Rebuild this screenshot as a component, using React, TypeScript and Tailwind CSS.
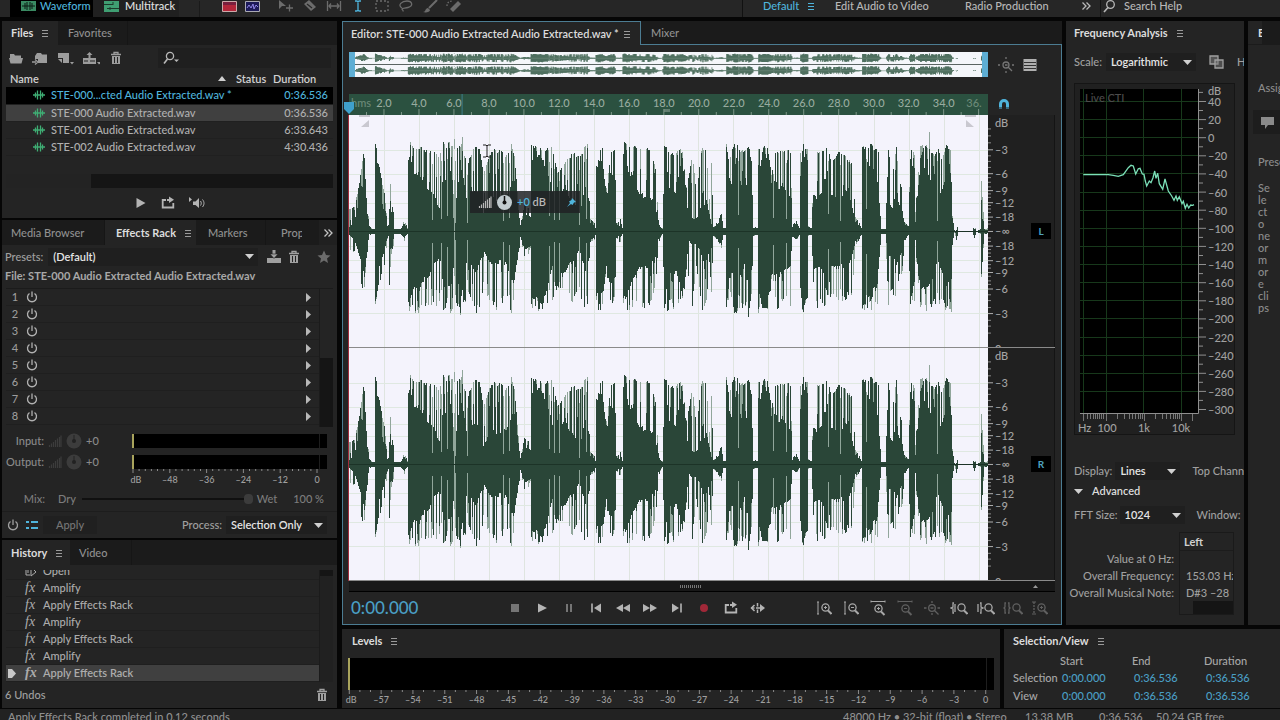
import { useState } from 'react';
import type { ReactNode } from 'react';

const files = [
  { name: 'STE-000...cted Audio Extracted.wav *', duration: '0:36.536', row: 'bg-black text-[#4fb4dc]' },
  { name: 'STE-000 Audio Extracted.wav', duration: '0:36.536', row: 'bg-[#404040] text-[#b0b0b0]' },
  { name: 'STE-001 Audio Extracted.wav', duration: '6:33.643', row: 'text-[#b0b0b0]' },
  { name: 'STE-002 Audio Extracted.wav', duration: '4:30.436', row: 'text-[#b0b0b0]' },
];

const history = ['Amplify', 'Apply Effects Rack', 'Amplify', 'Apply Effects Rack', 'Amplify', 'Apply Effects Rack'];

// label, distance from the top of a channel in percent
const dbScale: [string, number][] = [
  ['dB', 3.5], ['–3', 15], ['–6', 25.3], ['–9', 32.6], ['–12', 37.8], ['–18', 44], ['–∞', 50.2],
  ['–18', 56.5], ['–12', 62.8], ['–9', 67.9], ['–6', 75], ['–3', 85.6], ['0', 101],
];
const dbMinor = [6, 9, 12, 17.6, 20, 22.6, 27, 29, 31, 34, 35.5, 39, 40.5, 42, 45.5, 47, 53, 54.5, 58, 59.5, 61, 64.5, 66, 69.5, 71.5, 73, 77.5, 80, 83, 88.5, 91, 94];

const DURATION = 36.536;

// x, loudest peak, solid body
const envelope: [number, number, number][] = [
  [0, 22, 4], [5, 25, 10], [10, 49, 33], [14, 79, 48], [15, 75, 50], [17, 35, 25], [20, 5, 3], [23, 2, 2], [25, 2, 2],
  [26, 90, 78], [28, 85, 78], [29, 70, 45], [35, 40, 22], [38, 8, 5], [39, 6, 5], [40, 70, 25], [42, 30, 22], [44, 20, 10],
  [45, 2, 2], [51, 2, 2], [53, 8, 5], [55, 12, 8], [58, 3, 2], [59, 92, 78], [66, 88, 62], [74, 86, 55], [82, 84, 44],
  [90, 80, 26], [94, 90, 60], [103, 90, 60], [104, 40, 8], [106, 85, 30], [112, 90, 70], [118, 70, 30], [124, 86, 45],
  [130, 86, 38], [134, 60, 20], [142, 85, 38], [150, 84, 34], [156, 80, 36], [162, 90, 55], [165, 80, 55], [168, 40, 30],
  [171, 6, 5], [175, 27, 20], [179, 24, 16], [181, 18, 14], [182, 88, 75], [188, 86, 78], [196, 86, 74], [203, 86, 40],
  [208, 60, 38], [214, 70, 48], [222, 80, 34], [230, 76, 20], [236, 88, 45], [240, 88, 30], [241, 12, 8], [245, 9, 6],
  [246, 4, 4], [247, 86, 76], [253, 84, 70], [257, 45, 40], [261, 80, 60], [266, 84, 55], [267, 8, 5], [271, 12, 5],
  [273, 3, 3], [274, 90, 78], [284, 88, 56], [292, 84, 38], [300, 86, 40], [306, 66, 28], [309, 12, 8], [313, 3, 2],
  [315, 88, 80], [321, 80, 48], [328, 84, 44], [334, 84, 78], [338, 45, 40], [340, 55, 10], [344, 80, 14], [348, 40, 14],
  [351, 65, 20], [354, 90, 30], [358, 80, 32], [361, 35, 20], [363, 72, 8], [365, 4, 4], [368, 8, 6], [373, 18, 13],
  [375, 3, 3], [377, 3, 3], [378, 90, 86], [381, 70, 55], [384, 85, 45], [388, 90, 80], [391, 86, 50], [396, 82, 38],
  [400, 90, 55], [404, 70, 40], [405, 5, 4], [409, 3, 3], [410, 88, 58], [414, 86, 82], [419, 88, 82], [423, 60, 52],
  [428, 85, 50], [434, 85, 48], [442, 84, 38], [444, 6, 5], [448, 10, 8], [451, 3, 3], [452, 84, 60], [454, 92, 85],
  [459, 85, 80], [460, 5, 4], [463, 3, 3], [465, 55, 40], [468, 85, 38], [474, 84, 45], [479, 88, 68], [483, 70, 40],
  [491, 85, 38], [498, 76, 44], [504, 68, 25], [507, 15, 10], [511, 8, 6], [513, 3, 3], [514, 86, 82], [519, 90, 80],
  [528, 85, 60], [531, 80, 30], [533, 2, 2], [537, 2, 2], [538, 30, 12], [540, 85, 28], [544, 60, 26], [548, 86, 40],
  [551, 50, 28], [554, 45, 22], [556, 10, 8], [560, 5, 4], [562, 88, 78], [566, 80, 60], [567, 20, 10], [569, 50, 38],
  [572, 88, 68], [580, 86, 60], [586, 80, 48], [589, 85, 35], [594, 75, 45], [598, 88, 60], [603, 86, 50], [604, 15, 12],
  [606, 1, 0], [608, 9, 1], [610, 0, 0], [624, 0, 0], [626, 7, 2], [628, 0, 0], [632, 2, 1], [633, 52, 15], [635, 20, 10],
  [636, 2, 1], [640, 3, 1],
];

// thin slots where the signal drops
const slots = [83, 92, 98, 105, 106, 118, 154, 160, 200, 205, 210, 230, 237, 390, 425, 438, 480, 492, 518, 589];

const rand = (n: number) => {
  const v = Math.sin(n * 127.1 + 311.7) * 43758.5453;
  return v - Math.floor(v);
};

function sample(x: number) {
  let i = 0;
  while (i < envelope.length - 2 && envelope[i + 1][0] <= x) i++;
  const [x0, p0, c0] = envelope[i];
  const [x1, p1, c1] = envelope[i + 1];
  const t = Math.min(1, (x - x0) / (x1 - x0));
  return { peak: p0 + (p1 - p0) * t, core: c0 + (c1 - c0) * t };
}

function buildWave() {
  let dark = '';
  let light = '';
  const n = (v: number) => v.toFixed(1);
  for (let x = 0; x < 640; x++) {
    const { peak, core } = sample(x);
    const side = (seed: number, scale: number, spikes: number, floor: number) => {
      const r = rand(x * 1.37 + seed);
      const r2 = rand(x * 2.11 + seed * 3);
      // neighbouring columns share a slow ripple so spikes come in small clusters
      const ripple = rand(Math.floor(x / 3) + seed);
      const p = peak * scale * (floor + (1 - floor) * (ripple + r2) / 2);
      let c = core * scale * (0.85 + ripple * 0.15);
      if (slots.includes(x)) return { d: c * 0.3, l: p * 0.85 };
      if (r < spikes) c = Math.max(c, p);
      else if (r < spikes + 0.2) c += Math.max(0, p - c) * r2;
      return { d: c, l: r > spikes && r < spikes + 0.28 ? p : c };
    };
    const up = side(3, 1, 0.4, 0.92);
    const down = side(71, x < 60 ? 0.85 : 0.96, 0.25, 0.8);
    if (x !== 105) dark += `M${x} ${n(116.5 - up.d)}h1V${n(117.5 + down.d)}h-1z`;
    light += `M${x} ${n(116.5 - up.l)}h1V${n(117.5 + down.l)}h-1z`;
  }
  light += 'M105 24h1V34h-1zM113 22h1V40h-1zM581 17h1V60h-1z';
  return { dark, light };
}

const wave = buildWave();

const ctiCurve = [
  [70, 521], [145, 521], [160, 523], [175, 526], [190, 521], [205, 500], [213, 493], [220, 495], [227, 519], [235, 503],
  [240, 502], [247, 519], [252, 520], [256, 540], [260, 555], [268, 540], [273, 545], [279, 530], [284, 510], [288, 532],
  [293, 517], [298, 548], [308, 565], [315, 534], [325, 570], [335, 585], [342, 598], [348, 585], [352, 598], [358, 587],
  [366, 608], [370, 601], [376, 622], [381, 610], [386, 621], [392, 612], [398, 613], [402, 611],
].map(([x, y]) => `${(x / 3 - 20).toFixed(1)},${(y / 3 - 88).toFixed(1)}`).join(' ');

function Icon({ children, w = 16, className = '' }: { children: ReactNode; w?: number; className?: string }) {
  return (
    <svg width={w} height={16} viewBox={`0 0 ${w} 16`} fill="none" stroke="currentColor" strokeWidth={1.3} className={`shrink-0 ${className}`} aria-hidden="true">
      {children}
    </svg>
  );
}

const Menu = () => (
  <Icon w={8} className="text-[#9a9a9a]"><path d="M1 5.500h6M1 8.500h6M1 11.500h6" strokeWidth={1} /></Icon>
);
const WaveIcon = () => (
  <Icon w={14} className="text-[#3fae74]"><path d="M1 8h12M3.500 5.500v5M5.500 3.500v9M8.500 3.500v9M10.500 5.500v5" /></Icon>
);
const Trash = () => (
  <Icon w={12}><path d="M1 4.500h10M4 4V2.500h4V4" /><path d="M2 6h8v8H2z" fill="currentColor" stroke="none" /><path d="M4.500 7v6M7.500 7v6" stroke="#242424" strokeWidth={1} /></Icon>
);
const Power = () => (
  <Icon w={12}><path d="M3.500 4.500a4.500 4.500 0 1 0 5 0M6 2.500V8" /></Icon>
);
const Down = ({ className = '' }: { className?: string }) => (
  <svg width={9} height={5} viewBox="0 0 9 5" className={`shrink-0 ${className}`} aria-hidden="true"><path d="M0 0h9L4.500 5z" fill="#d0d0d0" /></svg>
);
const Loop = () => (
  <Icon w={14}><path d="M5 5H1.700v7.500h10.600V8M6 5h3.500" strokeWidth={1.800} /><path d="M8 1.500v6.500l5-3.250z" fill="currentColor" stroke="none" /></Icon>
);
const SaveIcon = () => (
  <Icon><path d="M1 9h14v5H1z" fill="currentColor" stroke="none" /><path d="M8 1v6" strokeWidth={3} /><path d="M4 5h8L8 9.500z" fill="currentColor" stroke="#242424" strokeWidth={0.600} /></Icon>
);
const GainIcon = () => (
  <Icon w={14}><path d="M1.500 12v2M3.500 10.500V14M5.500 9v5M7.500 7v7M9.500 5.500V14M11.500 4v10M13 2.500V14" strokeWidth={1.200} /></Icon>
);
const Lens = () => (
  <><circle cx="9.500" cy="7.500" r="3.600" /><path d="M12 10.500l3.500 3.500" strokeWidth={2} /></>
);
const Chevrons = () => (
  <Icon w={10}><path d="M1.500 4.500L5 8l-3.500 3.500M5.500 4.500L9 8l-3.500 3.500" /></Icon>
);

function IconButton({ label, children, className = '' }: { label: string; children: ReactNode; className?: string }) {
  return <button aria-label={label} className={`flex shrink-0 items-center justify-center ${className}`}>{children}</button>;
}

function Select({ label, options, className, id }: { label: string; options: string[]; className: string; id: string }) {
  return (
    <>
      <label htmlFor={id} className="shrink-0">{label}</label>
      <div className={`relative flex h-[18px] shrink-0 items-center bg-[#1f1f1f] ${className}`}>
        <select id={id} className="h-full w-full appearance-none bg-transparent pl-[5px] font-semibold text-[#e4e4e4] outline-none">
          {options.map((o) => <option key={o}>{o}</option>)}
        </select>
        <Down className="pointer-events-none absolute right-1" />
      </div>
    </>
  );
}

function Tab({ children, active, className = '' }: { children: ReactNode; active?: boolean; className?: string }) {
  return (
    <button className={`flex h-full shrink-0 items-center gap-2 pl-[9px] ${active ? 'bg-[#242424] font-bold text-[#dcdcdc]' : 'border-r border-[#161616] text-[#909090]'} ${className}`}>
      {children}
      {active && <Menu />}
    </button>
  );
}

function TopBar() {
  const tool = 'w-6 text-[#6c6c6c]';
  return (
    <header className="flex h-[17px] shrink-0 items-end overflow-hidden bg-[#262626] text-[#b8b8b8]">
      <button className="ml-[10px] flex h-[22px] w-[83px] shrink-0 items-center gap-1 bg-black pl-[11px] text-[#4fb4dc]">
        <svg width="15" height="10" viewBox="0 0 15 10" aria-hidden="true"><path d="M0 0h15v10H0z" fill="#3a8a62" /><path d="M1 5h13M4 2v6M6 1v8M9 1v8M11 2v6" stroke="#0b1a12" /></svg>
        Waveform
      </button>
      <button className="flex h-[22px] w-[86px] shrink-0 items-center gap-[6px] bg-[#202020] pl-[11px] text-[#e0e0e0]">
        <svg width="15" height="11" viewBox="0 0 15 11" aria-hidden="true"><path d="M0 0h15v11H0z" fill="#3f9e72" /><path d="M0 3.500h9M3 7.500h12M9 1v3M6 6v3" stroke="#1c3a2b" /></svg>
        Multitrack
      </button>
      <div className="ml-5 h-4 border-l border-[#1a1a1a]" />
      <div className="ml-[22px] flex h-[22px] items-center gap-2">
        <IconButton label="Spectral Frequency"><svg width="15" height="11" viewBox="0 0 15 11"><path d="M.500.500h14v10H.500z" fill="#b3263a" stroke="#caa" /><path d="M1 1h13v3H1z" fill="#7a1f3d" /></svg></IconButton>
        <IconButton label="Spectral Pitch"><svg width="15" height="11" viewBox="0 0 15 11"><path d="M.500.500h14v10H.500z" fill="#1c1a58" stroke="#a9a9b4" /><path d="M2 7l2-3 2 3 2-4 1 5 2-4 2 2" stroke="#8f85e6" fill="none" /></svg></IconButton>
      </div>
      <div className="ml-[14px] flex h-[22px] items-center">
        <IconButton label="Move Tool" className={tool}><Icon><path d="M1 2v9l3-3h4z" fill="currentColor" stroke="none" /><path d="M8 10h7M11.500 6.500v7" /></Icon></IconButton>
        <IconButton label="Razor" className={tool}><Icon><path d="M2 6l5-4 7 7-5 4z" fill="currentColor" stroke="none" /><path d="M5 6l5 4" stroke="#262626" /></Icon></IconButton>
        <IconButton label="Slip" className={tool}><Icon><path d="M1.500 3v10M14.500 3v10M3 8h10M5 5.500L3 8l2 2.500M11 5.500L13 8l-2 2.500" /></Icon></IconButton>
        <IconButton label="Time Selection" className="w-6 text-[#4fb4dc]"><Icon w={8}><path d="M1 3h2l1 1 1-1h2M4 3.500v9M1 13h2l1-1 1 1h2" /></Icon></IconButton>
        <IconButton label="Marquee" className={tool}><Icon><path d="M2 3h12v10H2z" strokeDasharray="2 2" /></Icon></IconButton>
        <IconButton label="Lasso" className={tool}><Icon><path d="M4 10C-1 7 4 3 9 3s7 5 1 6.500c-3 .800-6 .300-6 1.500 0 1 1.500.500 1 2.500" /></Icon></IconButton>
        <IconButton label="Paintbrush" className={tool}><Icon><path d="M15 2L7 10" strokeWidth={2} /><path d="M1 14c3 0 2-4 5-4l2 2c0 2-4 3-7 2z" fill="currentColor" stroke="none" /></Icon></IconButton>
        <IconButton label="Spot Healing" className={tool}><Icon><path d="M4 11L12 3l3 3-8 8z" fill="currentColor" stroke="none" /><path d="M1 8c0-4 3-5 6-5" strokeDasharray="1.500 1.500" /></Icon></IconButton>
      </div>
      <nav className="ml-auto flex h-[22px] w-[538px] shrink-0 items-center border-l border-[#111] pl-5">
        <button className="w-11 text-left text-[#4fb4dc]">Default</button>
        <Icon w={8} className="text-[#4fb4dc]"><path d="M1 5.500h6M1 8.500h6M1 11.500h6" strokeWidth={1} /></Icon>
        <button className="ml-5 w-[130px] text-left">Edit Audio to Video</button>
        <button className="w-[116px] text-left">Radio Production</button>
        <IconButton label="More workspaces"><Chevrons /></IconButton>
        <label className="ml-[9px] flex h-full flex-1 items-center gap-2 border-l border-[#151515] pl-[1px]">
          <Icon w={14}><circle cx="8.500" cy="6.500" r="3.800" /><path d="M6 9.500l-4 4.500" strokeWidth={1.600} /></Icon>
          <input aria-label="Search Help" placeholder="Search Help" className="w-full bg-transparent outline-none placeholder:text-[#b8b8b8]" />
        </label>
      </nav>
    </header>
  );
}

function FilesPanel() {
  return (
    <section className="flex h-[197px] shrink-0 flex-col overflow-hidden bg-[#242424]">
      <div className="flex h-6 shrink-0 bg-[#1b1b1b]">
        <Tab active className="w-14">Files</Tab>
        <Tab className="w-[70px] pl-[10px]">Favorites</Tab>
      </div>
      <div className="flex h-[25px] shrink-0 items-center px-[6px] text-[#9c9c9c]">
        <IconButton label="Open File" className="w-4"><Icon><path d="M2 4h4l1 1.500h6V8H2z" fill="currentColor" stroke="none" /><path d="M1 8h14l-1.500 5.500h-11z" fill="currentColor" stroke="none" /></Icon></IconButton>
        <IconButton label="Import File" className="ml-2 w-4"><Icon><path d="M5 3h4l1 1.500h5V13H6V9H3V6z" fill="currentColor" stroke="none" /><path d="M0 12h4M3 9.500L6 12l-3 2.500" /></Icon></IconButton>
        <IconButton label="New File" className="ml-2 w-[18px]"><Icon w={18}><path d="M2 3h11v10H7V8H2z" fill="currentColor" stroke="none" /><path d="M2 9h4v4z" fill="currentColor" stroke="none" /><path d="M14 12h4l-2 2.500z" fill="currentColor" stroke="none" /></Icon></IconButton>
        <IconButton label="Insert Into Multitrack" className="ml-2 w-[18px]"><Icon w={18}><path d="M1 8h13v6H1zM7.500 2l3 3h-2v3h-2V5h-2z" fill="currentColor" stroke="none" /><path d="M2 11h4M8 11h5" stroke="#242424" strokeWidth={1} /><path d="M15 12h4l-2 2.500z" fill="currentColor" stroke="none" /></Icon></IconButton>
        <IconButton label="Delete File" className="ml-2 w-4"><Trash /></IconButton>
        <label className="ml-[34px] flex h-5 flex-1 items-center bg-[#1f1f1f] pl-1 text-[#b8b8b8]">
          <Icon w={18}><circle cx="8" cy="6" r="3.600" /><path d="M5.500 9L2 13.500" strokeWidth={1.600} /><path d="M12 9.500h5L14.500 12z" fill="currentColor" stroke="none" /></Icon>
          <input aria-label="Search files" className="w-full min-w-0 bg-transparent outline-none" />
        </label>
      </div>
      <div className="mx-1 flex h-[118px] shrink-0 flex-col">
        <table className="w-full table-fixed border-collapse">
          <thead>
            <tr className="h-[17px] text-left text-[#d0d0d0]">
              <th className="p-0 pl-1 font-semibold">Name</th>
              <th className="w-[18px] p-0" aria-sort="ascending"><svg width="8" height="5" viewBox="0 0 8 5"><path d="M0 5h8L4 0z" fill="#d0d0d0" /></svg></th>
              <th className="w-[37px] p-0 font-semibold">Status</th>
              <th className="w-[60px] p-0 font-semibold">Duration</th>
            </tr>
          </thead>
          <tbody>
            {files.map((f, i) => (
              <tr key={i} className={`h-[17px] border-b border-[#202020] ${f.row}`}>
                <td colSpan={3} className="p-0 whitespace-nowrap">
                  <span className="flex items-center gap-[5px] pl-[26px]"><WaveIcon />{f.name}</span>
                </td>
                <td className="p-0 pr-[5px] text-right">{f.duration}</td>
              </tr>
            ))}
          </tbody>
        </table>
        <div className="mt-auto flex h-[14px] bg-[#151515]"><div className="w-[26%] bg-[#232323]" /></div>
      </div>
      <div className="flex flex-1 items-center justify-center gap-[14px] text-[#b4b4b4]">
        <IconButton label="Play"><Icon w={12}><path d="M1.500 3v10l9-5z" fill="currentColor" stroke="none" /></Icon></IconButton>
        <IconButton label="Loop"><Loop /></IconButton>
        <IconButton label="Auto-Play"><Icon><path d="M4 6.500h2.500L10 3v10L6.500 10H4z" fill="currentColor" stroke="none" /><path d="M0 2v5l3-2.500z" fill="currentColor" stroke="none" /><path d="M11.500 6c1 1.500 1 3 0 4.500M13.500 4.500c2 2.500 2 5 0 7.500" strokeWidth={1} /></Icon></IconButton>
      </div>
    </section>
  );
}

function GainRow({ label, scale }: { label: string; scale?: boolean }) {
  return (
    <div className={`flex items-start ${scale ? 'h-[35px]' : 'h-[21px]'}`}>
      <div className="flex h-4 w-[101px] items-center gap-1 text-[#8a8a8a]">
        <span className="w-[38px] text-right">{label}</span>
        <span className="text-[#3c3c3c]"><GainIcon /></span>
        <svg width="16" height="16" viewBox="0 0 16 16" aria-hidden="true"><circle cx="8" cy="8" r="7.500" fill="#3c3c3c" /><circle cx="8" cy="8" r="2" fill="#222" /><path d="M8 2v6" stroke="#222" /></svg>
        <span>+0</span>
      </div>
      <div className="ml-auto w-[195px] shrink-0">
        <div className="mt-[1px] flex h-[14px] justify-between bg-black"><div className="h-full border-l-2 border-[#a9a45c]" /><div className="mr-[7px] h-full border-l border-[#1e1e1e]" /></div>
        {scale && (
          <svg className="h-[18px] w-full overflow-visible" fontSize={9} fill="#a0a0a0">
            {Array.from({ length: 31 }, (_, i) => <path key={i} d={`M${(1 + i * 6.133).toFixed(1)} 0v${i % 6 ? 2 : 4}`} stroke="#8a8a8a" />)}
            {['dB', '–48', '–36', '–24', '–12', '0'].map((t, i) => <text key={t} x={i === 0 ? 4 : 1 + i * 36.8} y={14} textAnchor="middle">{t}</text>)}
          </svg>
        )}
      </div>
    </div>
  );
}

function EffectsPanel() {
  const [mix, setMix] = useState(100);
  return (
    <section className="flex h-[318px] shrink-0 flex-col overflow-hidden bg-[#242424]">
      <div className="flex h-[25px] shrink-0 bg-[#1b1b1b]">
        <Tab className="w-[103px]">Media Browser</Tab>
        <Tab active className="w-[91px] pl-[11px]">Effects Rack</Tab>
        <Tab className="w-[70px] pl-[12px]">Markers</Tab>
        <div className="w-9 shrink-0 overflow-hidden"><Tab className="w-[60px] pl-[15px]">Properties</Tab></div>
        <IconButton label="More panels" className="ml-auto w-[18px] bg-[#202020] text-[#c4c4c4]"><Chevrons /></IconButton>
      </div>
      <div className="flex h-[23px] shrink-0 items-center pl-[3px] text-[#a0a0a0]">
        <Select id="preset" label="Presets:" options={['(Default)']} className="ml-[5px] flex-1" />
        <IconButton label="Save Preset" className="ml-2"><SaveIcon /></IconButton>
        <IconButton label="Delete Preset" className="ml-[6px]"><Trash /></IconButton>
        <IconButton label="Favorite" className="mr-[5px] ml-4 text-[#6c6c6c]"><Icon><path d="M8 1.500l2 4.500 4.500.400-3.500 3 1 4.600L8 11.500 4 14l1-4.600-3.500-3L6 6z" fill="currentColor" stroke="none" /></Icon></IconButton>
      </div>
      <div className="h-[20px] shrink-0 pl-[3px] leading-4 font-bold text-[#a8a8a8]">File: STE-000 Audio Extracted Audio Extracted.wav</div>
      <div className="mx-1 flex h-[139px] shrink-0 border-t border-[#1b1b1b]">
        <ol className="flex-1">
          {[1, 2, 3, 4, 5, 6, 7, 8].map((n) => (
            <li key={n} className="flex h-[17px] items-center border-b border-[#1f1f1f] pr-2 text-[#9c9c9c]">
              <span className="w-[18px] text-center">{n}</span>
              <IconButton label={`Power ${n}`} className="ml-[2px] text-[#b0b0b0]"><Power /></IconButton>
              <IconButton label={`Insert effect ${n}`} className="ml-auto"><svg width="5" height="9" viewBox="0 0 5 9"><path d="M0 0v9l5-4.500z" fill="#b8b8b8" /></svg></IconButton>
            </li>
          ))}
        </ol>
        <div className="flex w-[14px] flex-col border-l border-[#1b1b1b] bg-[#151515]"><div className="h-1/2 bg-[#242424]" /></div>
      </div>
      <div className="pt-[6px] pr-[10px] pl-1">
        <GainRow label="Input:" />
        <GainRow label="Output:" scale />
      </div>
      <div className="flex h-5 items-center text-[#7c7c7c]">
        <span className="w-[43px] text-right">Mix:</span>
        <span className="ml-[13px] w-6">Dry</span>
        <input type="range" aria-label="Mix" value={mix} onChange={(e) => setMix(Number(e.target.value))} className="h-[2px] min-w-0 flex-1 appearance-none bg-[#101010] [&::-webkit-slider-thumb]:h-[10px] [&::-webkit-slider-thumb]:w-[9px] [&::-webkit-slider-thumb]:appearance-none [&::-webkit-slider-thumb]:rounded-sm [&::-webkit-slider-thumb]:bg-[#3c3c3c]" />
        <span className="ml-1">Wet</span>
        <span className="mr-[13px] ml-4">{mix} %</span>
      </div>
      <div className="mt-[2px] flex h-[27px] items-center border-t border-[#1d1d1d] pr-[10px] pl-[5px] text-[#a0a0a0]">
        <IconButton label="Rack power"><Power /></IconButton>
        <IconButton label="Toggle list" className="ml-[7px] text-[#4fb4dc]"><Icon w={12}><path d="M0 5h3M0 11h3M5 5h7M5 11h7" strokeWidth={2} /></Icon></IconButton>
        <button className="ml-[5px] h-[18px] w-[54px] bg-[#202020] text-[#757575]">Apply</button>
        <div className="ml-auto flex items-center"><Select id="process" label="Process:" options={['Selection Only']} className="ml-1 w-[101px]" /></div>
      </div>
    </section>
  );
}

function HistoryPanel() {
  return (
    <section className="flex flex-1 flex-col overflow-hidden bg-[#242424]">
      <div className="flex h-[25px] shrink-0 bg-[#1b1b1b]">
        <Tab active className="w-[68px]">History</Tab>
        <Tab className="w-[62px]">Video</Tab>
      </div>
      <div className="mx-1 mt-[5px] flex h-[112px] shrink-0 overflow-hidden text-[#acacac]">
        <ul className="flex flex-1 flex-col justify-end">
          <li className="flex h-[17px] shrink-0 items-center border-b border-[#1f1f1f] pl-[19px]"><Icon w={12}><path d="M1 3v9h4M3 5v5M6 4l5 5-5 4z" strokeWidth={1} /></Icon><span className="ml-[6px]">Open</span></li>
          {history.map((h, i) => (
            <li key={i} className={`flex h-[17px] shrink-0 items-center border-b border-[#1f1f1f] pl-[2px] ${i === history.length - 1 ? 'bg-[#404040] font-semibold' : ''}`}>
              <span className="w-[17px]">
                {i === history.length - 1 && <svg width="8" height="9" viewBox="0 0 8 9"><path d="M0 0h4l4 4.500L4 9H0z" fill="#c8c8c8" /></svg>}
              </span>
              <span className="w-[18px] font-['Liberation_Serif',serif] text-[14px] leading-4 italic">fx</span>
              {h}
            </li>
          ))}
        </ul>
        <div className="w-[14px] border-l border-[#1b1b1b] bg-[#212121]"><div className="h-[6px] bg-[#151515]" /></div>
      </div>
      <div className="flex flex-1 items-center pr-[9px] pl-[3px] text-[#a0a0a0]">
        6 Undos
        <IconButton label="Delete history" className="ml-auto"><Trash /></IconButton>
      </div>
    </section>
  );
}

function Overview() {
  return (
    <div className="relative h-[25px] min-w-0 flex-1 bg-[#f4f6fa]">
      <svg className="h-full w-full" viewBox="0 0 640 50" preserveAspectRatio="none" aria-hidden="true">
        <g transform="translate(0 .800) scale(1 .1)"><path d={wave.light} fill="#7d9689" /><path d={wave.dark} fill="#4e6f5f" /></g>
        <g transform="translate(0 25.800) scale(1 .1)"><path d={wave.light} fill="#7d9689" /><path d={wave.dark} fill="#4e6f5f" /></g>
        <path d="M0 12.500h605M0 37.500h605" stroke="#6d8a7c" strokeWidth={0.800} />
        <path d="M0 25h640" stroke="#5a6462" strokeWidth={2} />
      </svg>
      <div className="absolute inset-y-0 left-0 w-[6px] bg-[#5eaed4]" />
      <div className="absolute inset-y-0 right-0 w-[6px] bg-[#5eaed4]" />
    </div>
  );
}

function TimeRuler() {
  const pct = (s: number) => `${((s / DURATION) * 100).toFixed(2)}%`;
  return (
    <svg className="h-[21px] min-w-0 flex-1 bg-[#2b5140]" fontSize={11} fill="#98ab9f">
      <text x={2} y={13} fill="#6b8a78">hms</text>
      {Array.from({ length: 36 }, (_, i) => (
        <line key={i} x1={pct(i + 1)} x2={pct(i + 1)} y1={(i + 1) % 2 ? 18 : 15} y2={21} stroke="#7d9687" />
      ))}
      {Array.from({ length: 17 }, (_, i) => (
        <text key={i} x={pct(i * 2 + 2)} y={13} textAnchor="middle">{i * 2 + 2}.0</text>
      ))}
      <text x="97.800%" y={13} textAnchor="middle" fill="#6b8a78">36.</text>
      <line x1="17.700%" x2="17.700%" y1={0} y2={21} stroke="#3f7f8c" />
      <path d="M316 15v3M318 15v3M320 15v3" stroke="#98ab9f" />
    </svg>
  );
}

function Channel({ name }: { name: string }) {
  return (
    <div className="flex min-h-0 flex-1 border-b border-[#8a8a8a]">
      <div className="min-w-0 flex-1 bg-[#f4f3fc]">
        <svg className="h-full w-full" viewBox="0 0 640 233" preserveAspectRatio="none" shapeRendering="crispEdges" aria-label={`Channel ${name}`}>
          <path d={Array.from({ length: 18 }, (_, i) => `M${((i + 1) * 2 * 640 / DURATION).toFixed(0)}.500 0V233`).join('')} stroke="#dfe5e0" />
          <path d={dbScale.slice(1, 12).map(([, p]) => `M0 ${Math.round(p * 2.33)}.500H640`).join('')} stroke="#dfe8e1" />
          <path d={wave.light} fill="#91a69b" />
          <path d={wave.dark} fill="#2a4638" />
          <path d="M0 117H640" stroke="#1c3327" strokeWidth={1} />
        </svg>
      </div>
      <div className="flex w-[67px] shrink-0 items-center border-r border-[#141414] bg-[#202020]">
        <svg className="h-full w-10" fontSize={11} fill="#a4a4a4">
          {dbMinor.map((p) => <line key={p} x1={0} x2={3} y1={`${p}%`} y2={`${p}%`} stroke="#8a8a8a" />)}
          {dbScale.map(([t, p], i) => (
            <g key={i}>
              {i > 0 && i < 12 && <line x1={0} x2={5} y1={`${p}%`} y2={`${p}%`} stroke="#b0b0b0" />}
              <text x={7} y={`${p}%`} dy={4}>{t}</text>
            </g>
          ))}
        </svg>
        <button className="ml-[3px] h-4 w-5 bg-black text-[10px] leading-4 font-bold text-[#4fa3c0]">{name}</button>
      </div>
    </div>
  );
}

function EditorPanel() {
  const btn = 'w-[27px]';
  return (
    <section className="flex min-w-0 flex-1 flex-col bg-[#242424]">
      <div className="flex h-6 shrink-0 bg-[#1b1b1b]">
        <button className="flex w-[299px] shrink-0 items-center justify-between border-t border-r border-l border-[#4c7c92] bg-[#242424] pr-[9px] pl-2 font-semibold whitespace-nowrap text-[#dcdcdc]">
          Editor: STE-000 Audio Extracted Audio Extracted.wav *
          <Menu />
        </button>
        <button className="flex flex-1 items-center border-b border-[#4c7c92] pl-[10px] text-[#909090]">Mixer</button>
      </div>
      <div className="flex min-h-0 flex-1 flex-col border-x border-b border-[#4c7c92]">
        <div className="mt-[7px] flex shrink-0 items-center pl-[6px]">
          <Overview />
          <div className="flex w-[73px] shrink-0 items-center gap-[9px] pl-[10px]">
            <IconButton label="Zoom full" className="text-[#757575]"><Icon><circle cx="8" cy="8" r="3" /><path d="M7 8h2.500M10 10l4 4M8 0v2M8 14v2M0 8h2M14 8h2" /></Icon></IconButton>
            <IconButton label="Panel list" className="text-[#b0b0b0]"><Icon w={14}><path d="M.500 2h13v12H.500z" fill="currentColor" stroke="none" /><path d="M1 5.500h12M1 8.500h12M1 11.500h12" stroke="#333" strokeWidth={1} /></Icon></IconButton>
          </div>
        </div>
        <div className="mt-[17px] flex shrink-0 items-center pl-[6px]">
          <TimeRuler />
          <div className="flex w-[73px] shrink-0 pl-[9px]">
            <IconButton label="Snapping" className="text-[#4fb4dc]"><Icon w={14}><path d="M3.500 12V7a3.500 3.500 0 0 1 7 0v5" strokeWidth={3} /><path d="M1 11h5M8 11h5" stroke="#242424" strokeWidth={1} /></Icon></IconButton>
          </div>
        </div>
        <div className="relative mr-[6px] ml-[5px] flex min-h-0 flex-1 flex-col border-l border-[#a02c3c]">
          <Channel name="L" />
          <Channel name="R" />
          <svg width="12" height="12" viewBox="0 0 12 12" className="absolute -top-[13px] -left-[6px]"><path d="M1 0h10v7l-5 5-5-5z" fill="#3fa0cc" /></svg>
          <svg width="11" height="12" viewBox="0 0 11 12" className="absolute top-0 left-[10px]"><path d="M0 0h11v2H0zM10 5v7H2z" fill="#c9c8d0" /></svg>
          <svg width="11" height="12" viewBox="0 0 11 12" className="absolute top-0 right-[79px]"><path d="M0 0h11v2H0zM1 5v7h8z" fill="#c9c8d0" /></svg>
          <svg width="10" height="14" viewBox="0 0 10 14" className="absolute top-[29px] left-[133px]"><path d="M1 1h3l1 1 1-1h3M5 2v10M1 13h3l1-1 1 1h3" stroke="#202020" fill="none" /></svg>
          <div className="absolute top-[76px] left-[121px] flex h-[22px] w-[110px] items-center bg-[#202224]/85 pl-[8px] text-[#b8b8b8]">
            <GainIcon />
            <svg width="17" height="17" viewBox="0 0 17 17" className="ml-1"><circle cx="8.500" cy="8.500" r="7.500" fill="#c2ccd0" /><circle cx="8.500" cy="8.500" r="2" fill="#111" /><path d="M8.500 2v6" stroke="#111" strokeWidth="1.500" /></svg>
            <button className="ml-1 font-semibold"><span className="text-[#4fb4dc]">+0</span> dB</button>
            <IconButton label="Pin" className="mr-1 ml-auto text-[#4fb4dc]"><svg width="9" height="9" viewBox="0 0 9 9"><path d="M5 0l4 4-2 .500L5.500 7 4 6 0 9l3-4-1-1.500L4.500 2z" fill="currentColor" /></svg></IconButton>
          </div>
        </div>
        <div className="mr-[6px] ml-[6px] flex h-[11px] shrink-0 items-center border-b border-black bg-[#181818]">
          <svg width="22" height="3" className="mx-auto"><path d="M0 1.500h22" stroke="#777" strokeWidth={3} strokeDasharray="1 1" /></svg>
          <svg width="5" height="3" viewBox="0 0 5 3" className="mr-[17px]"><path d="M0 3h5L2.500 0z" fill="#999" /></svg>
        </div>
        <div className="flex h-[32px] shrink-0 items-center pl-2 text-[#b4b4b4]">
          <time className="w-[150px] text-[17px] text-[#4a9fc4]">0:00.000</time>
          <div className="flex">
            <IconButton label="Stop" className={`${btn} text-[#757575]`}><Icon w={10}><path d="M1 4h8v8H1z" fill="currentColor" stroke="none" /></Icon></IconButton>
            <IconButton label="Play" className={btn}><Icon w={10}><path d="M1 3.500v9L10 8z" fill="currentColor" stroke="none" /></Icon></IconButton>
            <IconButton label="Pause" className={`${btn} text-[#757575]`}><Icon w={10}><path d="M3 4v8M7 4v8" strokeWidth={2} /></Icon></IconButton>
            <IconButton label="Skip back" className={btn}><Icon w={12}><path d="M2 3.500v9" strokeWidth={1.600} /><path d="M11 3.500v9L4 8z" fill="currentColor" stroke="none" /></Icon></IconButton>
            <IconButton label="Rewind" className={btn}><Icon><path d="M8 4v8L1 8zM15 4v8L8 8z" fill="currentColor" stroke="none" /></Icon></IconButton>
            <IconButton label="Fast forward" className={btn}><Icon><path d="M1 4v8l7-4zM8 4v8l7-4z" fill="currentColor" stroke="none" /></Icon></IconButton>
            <IconButton label="Skip forward" className={btn}><Icon w={12}><path d="M10 3.500v9" strokeWidth={1.600} /><path d="M1 3.500v9L8 8z" fill="currentColor" stroke="none" /></Icon></IconButton>
            <IconButton label="Record" className={`${btn} text-[#a02838]`}><Icon w={10}><circle cx="5" cy="8" r="4" fill="currentColor" stroke="none" /></Icon></IconButton>
            <IconButton label="Loop" className={btn}><Loop /></IconButton>
            <IconButton label="Skip selection" className={btn}><Icon><path d="M4.500 5L1.500 8l3 3M7.500 3v3.500M7.500 9.500V13" strokeWidth={1.500} /><path d="M1.500 8h3M6 8h5" strokeWidth={1.500} /><path d="M10 4l5 4-5 4z" fill="currentColor" stroke="none" /></Icon></IconButton>
          </div>
          <div className="mr-2 ml-auto flex text-[#a8a8a8]">
            <IconButton label="Zoom in amplitude" className={btn}><Icon><path d="M2 2v12M1 2h2M1 14h2M8 7.500h3M9.500 6v3" strokeWidth={1} /><Lens /></Icon></IconButton>
            <IconButton label="Zoom out amplitude" className={btn}><Icon><path d="M2 2v12M1 2h2M1 14h2M8 7.500h3" strokeWidth={1} /><Lens /></Icon></IconButton>
            <IconButton label="Zoom in time" className={btn}><Icon><path d="M1 1.500h14M1 .500v2M15 .500v2M7 8.500h3M8.500 7v3" strokeWidth={1} /><g transform="translate(-1 1)"><Lens /></g></Icon></IconButton>
            <IconButton label="Zoom out time" className={`${btn} text-[#606060]`}><Icon><path d="M1 1.500h14M1 .500v2M15 .500v2M7 8.500h3" strokeWidth={1} /><g transform="translate(-1 1)"><Lens /></g></Icon></IconButton>
            <IconButton label="Zoom out full" className={`${btn} text-[#606060]`}><Icon><circle cx="8" cy="8" r="3.300" /><path d="M6.500 8h3M10.500 10.500l4 4M8 1v2M8 13v2M0 8h2.500M13.500 8H16" /></Icon></IconButton>
            <IconButton label="Zoom to in point" className={btn}><Icon w={18}><path d="M4 3H3v4L1 8l2 1v4h1M5 4v8" /><g transform="translate(2)"><Lens /></g></Icon></IconButton>
            <IconButton label="Zoom to out point" className={btn}><Icon w={18}><path d="M3 3h1v4l2 1-2 1v4H3M1 4v8" /><g transform="translate(2)"><Lens /></g></Icon></IconButton>
            <IconButton label="Zoom to selection" className={`${btn} text-[#606060]`}><Icon w={20}><path d="M3 3H2v4L1 8l1 1v4h1M5 3h1v4l1 1-1 1v4H5" /><g transform="translate(4)"><Lens /></g></Icon></IconButton>
            <IconButton label="Zoom all tracks" className={`${btn} text-[#606060]`}><Icon><path d="M2 2v12" strokeDasharray="2 1" /><path d="M0 2h4M0 14h4M8 7.500h3M9.500 6v3" strokeWidth={1} /><Lens /></Icon></IconButton>
          </div>
        </div>
      </div>
    </section>
  );
}

function FrequencyPanel() {
  const minorHz = [3, 7, 10, 13, 15, 17, 19, 21, 23, 26, 37, 44, 49, 52, 55, 58, 60, 62, 64, 75, 82, 86, 90, 93, 95, 97, 99, 101, 112];
  return (
    <section className="flex w-[178px] shrink-0 flex-col overflow-hidden bg-[#242424] pl-2 text-[#a0a0a0]">
      <div className="flex h-6 shrink-0 items-center gap-2 font-bold text-[#dcdcdc]">Frequency Analysis <Menu /></div>
      <div className="mt-2 flex h-[18px] shrink-0 items-center">
        <Select id="scale" label="Scale:" options={['Logarithmic', 'Linear']} className="ml-1 w-[90px]" />
        <IconButton label="Copy values" className="ml-[13px]"><Icon w={15}><path d="M1 2h8v8H1z" fill="#555" /><path d="M6 6h8v8H6z" fill="#777" fillOpacity={0.500} /></Icon></IconButton>
        <span className="ml-[13px] shrink-0">Hold:</span>
      </div>
      <div className="mt-3 mr-[9px] shrink-0 border border-[#151515] bg-[#202020]">
        <svg width="159" height="350" fontSize={11} fill="#a0a0a0">
          <g transform="translate(5 5)">
            <path d="M0 0h118v324H0z" fill="#000" />
            {Array.from({ length: 17 }, (_, i) => <path key={i} d={`M0 ${Math.round(12 + i * 18.12)}.500H118`} stroke="#17381b" />)}
            <path d="M3.500 0V324M26.500 0V324M63.500 0V324M101.500 0V324" stroke="#17381b" />
            <text x={5} y={13} fill="#4c4c4c">Live CTI</text>
            <polyline points={ctiCurve} fill="none" stroke="#7be0b8" strokeWidth={1.300} />
            <path d="M118.500 0V324.500H0" stroke="#8f8f8f" fill="none" />
            {Array.from({ length: 36 }, (_, i) => <path key={i} d={`M119 ${(3.400 + i * 9.060).toFixed(1)}h${i % 2 ? 7 : 4}`} stroke="#8f8f8f" />)}
            {minorHz.map((x) => <path key={x} d={`M${x}.500 325v${[3, 26, 64, 101, 112].includes(x) ? 7 : 5}`} stroke="#777" />)}
            <text x={128} y={6}>dB</text>
            {Array.from({ length: 18 }, (_, i) => {
              const v = 40 - i * 20;
              return <text key={v} x={128} y={Math.round(17 + i * 18.120)}>{v < 0 ? `–${-v}` : v}</text>;
            })}
            <text x={-2} y={343}>Hz</text>
            <text x={27} y={343} textAnchor="middle">100</text>
            <text x={64} y={343} textAnchor="middle">1k</text>
            <text x={101} y={343} textAnchor="middle">10k</text>
          </g>
        </svg>
      </div>
      <div className="mt-[27px] flex h-[18px] shrink-0 items-center">
        <Select id="display" label="Display:" options={['Lines', 'Bars', 'Area']} className="ml-[3px] w-[65px]" />
        <span className="ml-3 shrink-0">Top Channel:</span>
      </div>
      <button className="mt-[2px] flex h-[18px] shrink-0 items-center gap-[9px] font-semibold text-[#dcdcdc]"><Down />Advanced</button>
      <div className="mt-[6px] flex h-[18px] shrink-0 items-center">
        <Select id="fft" label="FFT Size:" options={['1024', '2048', '4096']} className="ml-[2px] w-[65px]" />
        <span className="ml-3 w-11 shrink-0">Window:</span><span className="ml-1 h-full w-8 shrink-0 bg-[#1f1f1f]" />
      </div>
      <div className="mt-2 mr-[10px] flex shrink-0 justify-end">
        <dl className="mt-[18px] text-right leading-[17px] whitespace-nowrap">
          <dt>Value at 0 Hz:</dt>
          <dt>Overall Frequency:</dt>
          <dt>Overall Musical Note:</dt>
        </dl>
        <div className="ml-[5px] w-[55px] shrink-0 overflow-hidden border border-[#1a1a1a] leading-[17px] whitespace-nowrap">
          <div className="pl-1 font-bold text-[#d0d0d0]">Left</div>
          <div className="h-[17px] border-t border-[#1c1c1c]" />
          <div className="pl-[6px]">153.03 Hz</div>
          <div className="pl-[6px]">D#3 –28</div>
          <div className="flex h-[13px] bg-[#151515]"><div className="w-[13px] bg-[#242424]" /></div>
        </div>
      </div>
    </section>
  );
}

function EssentialSound() {
  return (
    <section className="w-8 shrink-0 overflow-hidden bg-[#242424] text-[#8c8c8c]">
      <div className="flex h-6 border-b border-[#1b1b1b]">
        <div className="flex w-[14px] items-center overflow-hidden pl-[10px] font-bold text-[#dcdcdc]">E</div>
        <div className="flex-1 bg-[#1b1b1b]" />
      </div>
      <div className="mt-[33px] overflow-hidden pl-[10px] leading-5 whitespace-nowrap">Assign</div>
      <button aria-label="Dialogue" className="mt-[12px] ml-[5px] flex h-6 w-full items-center bg-[#1d1d1d] pl-2"><svg width="13" height="13" viewBox="0 0 13 13"><path d="M0 1h13v8H7l-3 4V9H0z" fill="#8a8a8a" /></svg></button>
      <div className="mt-[18px] overflow-hidden pl-[10px] leading-5 whitespace-nowrap">Preset</div>
      <p className="mt-[10px] pl-[10px] leading-[12px] whitespace-pre-line">{'Se\nle\nct\no\nne\nor\nm\nor\ne\ncli\nps'}</p>
    </section>
  );
}

function LevelsPanel() {
  return (
    <section className="flex min-w-0 flex-1 flex-col bg-[#242424] px-[6px]">
      <div className="flex h-6 items-center gap-2 pl-1 font-bold text-[#dcdcdc]">Levels <Menu /></div>
      <div className="mt-[5px] flex h-8 justify-between bg-black">
        <div className="border-l-2 border-[#a9a45c]" />
        <div className="mr-[7px] border-l border-[#1e1e1e]" />
      </div>
      <svg className="h-[18px] w-full overflow-visible" fontSize={9} fill="#a0a0a0">
        {Array.from({ length: 61 }, (_, i) => {
          const x = `${(0.2 + i * 1.642).toFixed(2)}%`;
          return <line key={i} x1={x} x2={x} y1={0} y2={i % 3 ? 2 : 4} stroke="#8a8a8a" />;
        })}
        {Array.from({ length: 21 }, (_, i) => (
          <text key={i} x={`${(i === 0 ? 0.5 : 0.2 + i * 4.926).toFixed(2)}%`} y={13} textAnchor="middle">
            {i === 0 ? 'dB' : i === 20 ? '0' : `–${60 - i * 3}`}
          </text>
        ))}
      </svg>
    </section>
  );
}

function SelectionPanel() {
  return (
    <section className="w-[276px] shrink-0 bg-[#242424] pl-[9px] text-[#a8a8a8]">
      <div className="flex h-6 items-center gap-2 font-bold text-[#dcdcdc]">Selection/View <Menu /></div>
      <table className="w-full table-fixed border-collapse text-left">
        <thead>
          <tr className="h-4">
            <th className="w-[47px] p-0" />
            <th className="w-[72px] p-0 font-medium">Start</th>
            <th className="w-[72px] p-0 font-medium">End</th>
            <th className="p-0 font-medium">Duration</th>
          </tr>
        </thead>
        <tbody>
          {['Selection', 'View'].map((r) => (
            <tr key={r} className="h-[18px] text-[#4a9fc4]">
              <th className="p-0 font-medium text-[#a8a8a8]">{r}</th>
              <td className="p-0 pl-[2px]">0:00.000</td>
              <td className="p-0 pl-[2px]">0:36.536</td>
              <td className="p-0 pl-[2px]">0:36.536</td>
            </tr>
          ))}
        </tbody>
      </table>
    </section>
  );
}

function App() {
  return (
    <div className="flex h-screen flex-col overflow-hidden bg-[#060606] font-['Lato','Open_Sans',sans-serif] text-[11px] leading-4 font-medium">
      <TopBar />
      <main className="mt-1 flex min-h-0 flex-1 gap-[5px] pl-[2px]">
        <div className="flex w-[335px] shrink-0 flex-col gap-[2px]">
          <FilesPanel />
          <EffectsPanel />
          <HistoryPanel />
        </div>
        <div className="flex min-w-0 flex-1 flex-col gap-1">
          <div className="flex min-h-0 flex-1 gap-1">
            <EditorPanel />
            <FrequencyPanel />
            <EssentialSound />
          </div>
          <div className="flex h-[79px] shrink-0 gap-1">
            <LevelsPanel />
            <SelectionPanel />
          </div>
        </div>
      </main>
      <footer className="mt-[1px] flex h-[11px] shrink-0 overflow-hidden bg-[#222] px-2 whitespace-nowrap text-[#909090]">
        <span>Apply Effects Rack completed in 0.12 seconds</span>
        <span className="ml-auto w-[182px]">48000 Hz • 32-bit (float) • Stereo</span>
        <span className="w-[74px]">13.38 MB</span>
        <span className="w-[57px]">0:36.536</span>
        <span className="w-[116px]">50.24 GB free</span>
      </footer>
    </div>
  );
}

export default App;
